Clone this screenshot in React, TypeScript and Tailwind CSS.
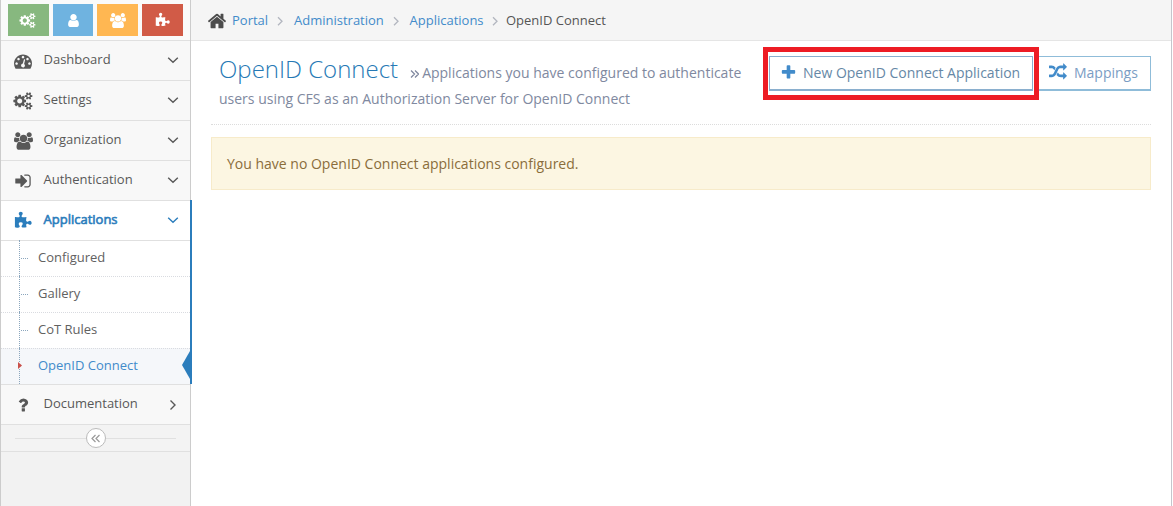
import React from "react";

type Glyph = { d: string; w: number };

const glyphs = {
  home: {
    w: 1792,
    d: "M1472 992v480q0 26-19 45t-45 19h-384v-384h-256v384h-384q-26 0-45-19t-19-45v-480q0-1 .5-3t.5-3l575-474 575 474q1 2 1 6zm223-69l-62 74q-8 9-21 11h-3q-13 0-21-7l-692-577-692 577q-12 8-24 7-13-2-21-11l-62-74q-8-10-7-23.5t11-21.5l719-599q32-26 76-26t76 26l244 204v-195q0-14 9-23t23-9h192q14 0 23 9t9 23v408l219 182q10 8 11 21.5t-7 23.5z",
  },
  plus: {
    w: 1792,
    d: "M1600 736v192q0 40-28 68t-68 28h-416v416q0 40-28 68t-68 28h-192q-40 0-68-28t-28-68v-416h-416q-40 0-68-28t-28-68v-192q0-40 28-68t68-28h416v-416q0-40 28-68t68-28h192q40 0 68 28t28 68v416h416q40 0 68 28t28 68z",
  },
  random: {
    w: 1792,
    d: "M666 481q-60 92-137 273-22-45-37-72.5t-40.5-63.5-51-56.5-63-35-81.5-14.5h-224q-14 0-23-9t-9-23v-192q0-14 9-23t23-9h224q250 0 410 225zm1126 799q0 14-9 23l-320 320q-9 9-23 9-13 0-22.5-9.5t-9.5-22.5v-192q-32 0-85 .5t-81 1-73-1-71-5-64-10.5-63-18.5-58-28.5-59-40-55-53.5-56-69.5q59-93 136-273 22 45 37 72.5t40.5 63.5 51 56.5 63 35 81.5 14.5h256v-192q0-14 9-23t23-9q12 0 24 10l319 319q9 9 9 23zm0-896q0 14-9 23l-320 320q-9 9-23 9-13 0-22.5-9.5t-9.5-22.5v-192h-256q-48 0-87 15t-69 45-51 61.5-45 77.5q-32 62-78 171-29 66-49.5 111t-54 105-64 100-74 83-90 68.5-106.5 42-128 16.5h-224q-14 0-23-9t-9-23v-192q0-14 9-23t23-9h224q48 0 87-15t69-45 51-61.5 45-77.5q32-62 78-171 29-66 49.5-111t54-105 64-100 74-83 90-68.5 106.5-42 128-16.5h256v-192q0-14 9-23t23-9q12 0 24 10l319 319q9 9 9 23z",
  },
  cogs: {
    w: 1920,
    d: "M832 896q0-106-75-181t-181-75-181 75-75 181 75 181 181 75 181-75 75-181zm768 512q0-52-38-90t-90-38-90 38-38 90q0 53 37.5 90.5t90.5 37.5 90.5-37.5 37.5-90.5zm0-1024q0-52-38-90t-90-38-90 38-38 90q0 53 37.5 90.5t90.5 37.5 90.5-37.5 37.5-90.5zm-384 421v185q0 10-7 19.5t-16 10.5l-155 24q-11 35-32 76 34 48 90 115 7 11 7 20 0 12-7 19-23 30-82.5 89.5t-78.5 59.5q-11 0-21-7l-115-90q-37 19-77 31-11 108-23 155-7 24-30 24h-186q-11 0-20-7.5t-10-17.5l-23-153q-34-10-75-31l-118 89q-7 7-20 7-11 0-21-8-144-133-144-160 0-9 7-19 10-14 41-53t47-61q-23-44-35-82l-152-24q-10-1-17-9.5t-7-19.5v-185q0-10 7-19.5t16-10.5l155-24q11-35 32-76-34-48-90-115-7-11-7-20 0-12 7-20 22-30 82-89t79-59q11 0 21 7l115 90q34-18 77-32 11-108 23-154 7-24 30-24h186q11 0 20 7.5t10 17.5l23 153q34 10 75 31l118-89q8-7 20-7 11 0 21 8 144 133 144 160 0 8-7 19-12 16-42 54t-45 60q23 48 34 82l152 23q10 2 17 10.5t7 19.5zm640 533v140q0 16-149 31-12 27-30 52 51 113 51 138 0 4-4 7-122 71-124 71-8 0-46-47t-52-68q-20 2-30 2t-30-2q-14 21-52 68t-46 47q-2 0-124-71-4-3-4-7 0-25 51-138-18-25-30-52-149-15-149-31v-140q0-16 149-31 13-29 30-52-51-113-51-138 0-4 4-7 4-2 35-20t59-34 30-16q8 0 46 46.5t52 67.5q20-2 30-2t30 2q51-71 92-112l6-2q4 0 124 70 4 3 4 7 0 25-51 138 17 23 30 52 149 15 149 31zm0-1024v140q0 16-149 31-12 27-30 52 51 113 51 138 0 4-4 7-122 71-124 71-8 0-46-47t-52-68q-20 2-30 2t-30-2q-14 21-52 68t-46 47q-2 0-124-71-4-3-4-7 0-25 51-138-18-25-30-52-149-15-149-31v-140q0-16 149-31 13-29 30-52-51-113-51-138 0-4 4-7 4-2 35-20t59-34 30-16q8 0 46 46.5t52 67.5q20-2 30-2t30 2q51-71 92-112l6-2q4 0 124 70 4 3 4 7 0 25-51 138 17 23 30 52 149 15 149 31z",
  },
  users: {
    w: 1920,
    d: "M593 896q-162 5-265 128h-134q-82 0-138-40.5t-56-118.5q0-353 124-353 6 0 43.5 21t97.5 42.5 119 21.5q67 0 133-23-5 37-5 66 0 139 81 256zm1071 637q0 120-73 189.5t-194 69.5h-874q-121 0-194-69.5t-73-189.5q0-53 3.5-103.5t14-109 26.5-108.5 43-97.5 62-81 85.5-53.5 111.5-20q10 0 43 21.5t73 48 107 48 135 21.5 135-21.5 107-48 73-48 43-21.5q61 0 111.5 20t85.5 53.5 62 81 43 97.5 26.5 108.5 14 109 3.5 103.5zm-1024-1277q0 106-75 181t-181 75-181-75-75-181 75-181 181-75 181 75 75 181zm704 384q0 159-112.5 271.5t-271.5 112.5-271.5-112.5-112.5-271.5 112.5-271.5 271.5-112.5 271.5 112.5 112.5 271.5zm576 225q0 78-56 118.5t-138 40.5h-134q-103-123-265-128 81-117 81-256 0-29-5-66 66 23 133 23 59 0 119-21.5t97.5-42.5 43.5-21q124 0 124 353zm-128-609q0 106-75 181t-181 75-181-75-75-181 75-181 181-75 181 75 75 181z",
  },
  user: {
    w: 1792,
    d: "M1536 1399q0 109-62.5 187t-150.5 78h-854q-88 0-150.5-78t-62.5-187q0-85 8.5-160.5t31.5-152 58.5-131 94-89 134.5-34.5q131 128 313 128t313-128q76 0 134.5 34.5t94 89 58.5 131 31.5 152 8.5 160.5zm-256-887q0 159-112.5 271.5t-271.5 112.5-271.5-112.5-112.5-271.5 112.5-271.5 271.5-112.5 271.5 112.5 112.5 271.5z",
  },
  puzzle: {
    w: 1792,
    d: "M1755 1083q0 81-44.5 135t-123.5 54q-41 0-77.5-17.5t-59-38-56.5-38-71-17.5q-110 0-110 124 0 39 16 115t15 115v5q-22 0-33 1-34 3-97.5 11.5t-115.5 13.5-98 5q-61 0-103-26.5t-42-83.5q0-37 17.5-71t38-56.5 38-59 17.5-77.5q0-79-54-123.5t-135-44.5q-84 0-143 45.5t-59 127.5q0 43 15 83t33.5 64.5 33.5 53 15 50.5q0 45-46 89-37 35-117 35-95 0-245-24-9-2-27.5-4t-27.5-4l-13-2q-1 0-3-1-2 0-2-1v-1024q2 1 17.5 3.5t34 5 21.5 3.5q150 24 245 24 80 0 117-35 46-44 46-89 0-22-15-50.5t-33.5-53-33.5-64.5-15-83q0-82 59-127.5t144-45.5q80 0 134 44.5t54 123.5q0 41-17.5 77.5t-38 59-38 56.5-17.5 71q0 57 42 83.5t103 26.5q64 0 180-15t163-17v2q-1 2-3.5 17.5t-5 34-3.5 21.5q-24 150-24 245 0 80 35 117 44 46 89 46 22 0 50.5-15t53-33.5 64.5-33.5 83-15q82 0 127.5 59t45.5 143z",
  },
  signIn: {
    w: 1792,
    d: "M1312 896q0 26-19 45l-544 544q-19 19-45 19t-45-19-19-45v-288h-448q-26 0-45-19t-19-45v-384q0-26 19-45t45-19h448v-288q0-26 19-45t45-19 45 19l544 544q19 19 19 45zm352-352v704q0 119-84.5 203.5t-203.5 84.5h-320q-13 0-22.5-9.5t-9.5-22.5q0-4-1-20t-.5-26.5 3-23.5 10-19.5 20.5-6.5h320q66 0 113-47t47-113v-704q0-66-47-113t-113-47h-312l-11.5-1-11.5-3-8-5.5-7-9-2-13.5q0-4-1-20t-.5-26.5 3-23.5 10-19.5 20.5-6.5h320q119 0 203.5 84.5t84.5 203.5z",
  },
  gauge: {
    w: 1792,
    d: "M384 1152q0-53-37.5-90.5t-90.5-37.5-90.5 37.5-37.5 90.5 37.5 90.5 90.5 37.5 90.5-37.5 37.5-90.5zm192-448q0-53-37.5-90.5t-90.5-37.5-90.5 37.5-37.5 90.5 37.5 90.5 90.5 37.5 90.5-37.5 37.5-90.5zm428 481l101-382q6-26-7.5-48.5t-38.5-29.5-48 6.5-30 39.5l-101 382q-60 5-107 43.5t-63 98.5q-20 77 20 146t117 89 146-20 89-117q16-60-6-117t-72-91zm660-33q0-53-37.5-90.5t-90.5-37.5-90.5 37.5-37.5 90.5 37.5 90.5 90.5 37.5 90.5-37.5 37.5-90.5zm-640-640q0-53-37.5-90.5t-90.5-37.5-90.5 37.5-37.5 90.5 37.5 90.5 90.5 37.5 90.5-37.5 37.5-90.5zm448 192q0-53-37.5-90.5t-90.5-37.5-90.5 37.5-37.5 90.5 37.5 90.5 90.5 37.5 90.5-37.5 37.5-90.5zm320 448q0 261-141 483-19 29-54 29h-1402q-35 0-54-29-141-221-141-483 0-182 71-348t191-286 286-191 348-71 348 71 286 191 191 286 71 348z",
  },
  question: {
    w: 1792,
    d: "M1088 1256v240q0 16-12 28t-28 12h-240q-16 0-28-12t-12-28v-240q0-16 12-28t28-12h240q16 0 28 12t12 28zm316-600q0 54-15.5 101t-35 76.5-55 59.5-57.5 43.5-61 35.5q-41 23-68.5 65t-27.5 67q0 17-12 32.5t-28 15.5h-240q-15 0-25.5-18.5t-10.5-37.5v-45q0-83 65-156.5t143-108.5q59-27 84-56t25-76q0-42-46.5-74t-107.5-32q-65 0-108 29-35 25-107 115-13 16-31 16-12 0-25-8l-164-125q-13-10-15.5-25t5.5-28q160-266 464-266 80 0 161 31t146 83 106 127.5 41 158.5z",
  },
} satisfies Record<string, Glyph>;

type IconName = keyof typeof glyphs;

function Icon({ name, className }: { name: IconName; className: string }) {
  const g = glyphs[name];
  return (
    <svg viewBox={`0 0 ${g.w} 1792`} className={`shrink-0 overflow-visible fill-current ${className}`} aria-hidden="true">
      <path d={g.d} />
    </svg>
  );
}

function Stroke({ d, className, box = "0 0 12 12" }: { d: string; className: string; box?: string }) {
  return (
    <svg viewBox={box} className={`shrink-0 fill-none stroke-current ${className}`} aria-hidden="true">
      <path d={d} />
    </svg>
  );
}

const shortcuts: { icon: IconName; bg: string; size: string }[] = [
  { icon: "cogs", bg: "bg-[#87b87f]", size: "h-[15px] w-[16px]" },
  { icon: "user", bg: "bg-[#6fb3e0]", size: "h-[15px] w-[15px]" },
  { icon: "users", bg: "bg-[#ffb752]", size: "h-[15px] w-[16px]" },
  { icon: "puzzle", bg: "bg-[#d15b47]", size: "h-[15px] w-[15px]" },
];

function MenuRow({ icon, label, size, active, right }: { icon: IconName; label: string; size: string; active?: boolean; right?: boolean }) {
  return (
    <a
      className={`flex h-10 items-center border-t border-[#e0e0e0] pr-[11px] pl-[7px] text-[13px] ${
        active ? "bg-white text-[#2b7dbc]" : "bg-[#f8f8f8] text-[#585858]"
      }`}
    >
      <span className="flex w-[30px] justify-center pt-px">
        <Icon name={icon} className={size} />
      </span>
      <span className={`grow pb-1 pl-[5.5px] leading-5 ${active ? "[-webkit-text-stroke:0.6px_#2b7dbc]" : ""}`}>{label}</span>
      <span className="pb-0.5">
        <Stroke
          d={right ? "M3.5 1.5 8 6 3.5 10.5" : "M1.2 3.7 6 8.2 10.8 3.7"}
          className={`block h-3 w-3 stroke-[1.4] ${right ? "translate-y-px" : ""}`}
        />
      </span>
    </a>
  );
}

function SubRow({ label, current, first }: { label: string; current?: boolean; first?: boolean }) {
  return (
    <a
      className={`relative flex h-9 items-center border-t pl-[37px] text-[13px] ${first ? "border-solid border-[#e0e0e0]" : "border-dotted border-[#d9dbe0]"} ${
        current ? "bg-[#f5f7fa] text-[#428bca]" : "bg-white text-[#616161]"
      }`}
    >
      <span className="absolute -top-px bottom-0 left-[18px] border-l border-dotted border-[#8ba6bd]" />
      {current ? (
        <svg viewBox="0 0 4 7" className="absolute top-[13px] left-[17px] h-[7px] w-[4px] bg-[#f5f7fa] fill-[#c9504a]">
          <path d="M0 0 4 3.5 0 7z" />
        </svg>
      ) : (
        <span className="absolute top-[17px] left-[20px] w-[7px] border-t border-dotted border-[#8ba6bd]" />
      )}
      <span className="pb-1 leading-5">{label}</span>
      {current && (
        <svg viewBox="0 0 8 28" className="absolute top-0.5 right-0 h-7 w-2 fill-[#2b7dbc]">
          <path d="M8 0 0 14 8 28z" />
        </svg>
      )}
    </a>
  );
}

function Sidebar() {
  return (
    <aside className="flex w-[191px] shrink-0 flex-col border-x border-[#ccc] bg-[#f2f2f2]">
      <div className="flex h-10 gap-[4px] bg-[#fafafa] pt-1 pl-[7px]">
        {shortcuts.map((s) => (
          <button key={s.icon} className={`flex h-8 w-[40.7px] items-center justify-center text-white ${s.bg}`}>
            <Icon name={s.icon} className={s.size} />
          </button>
        ))}
      </div>
      <nav>
        <MenuRow icon="gauge" label="Dashboard" size="h-[18px] w-[18px]" />
        <MenuRow icon="cogs" label="Settings" size="h-[18px] w-[19px]" />
        <MenuRow icon="users" label="Organization" size="h-[18px] w-[19px]" />
        <MenuRow icon="signIn" label="Authentication" size="h-[18px] w-[18px]" />
        <div className="relative">
          <MenuRow icon="puzzle" label="Applications" size="h-[18px] w-[18px]" active />
          <SubRow label="Configured" first />
          <SubRow label="Gallery" />
          <SubRow label="CoT Rules" />
          <SubRow label="OpenID Connect" current />
          <span className="absolute top-0 -right-[2px] bottom-0 w-[2px] bg-[#2b7dbc]" />
        </div>
        <MenuRow icon="question" label="Documentation" size="h-[18px] w-[18px]" right />
      </nav>
      <div className="flex h-7 items-center border-y border-[#e0e0e0] bg-[#f3f3f3] px-[14px]">
        <span className="h-px grow bg-[#e0e0e0]" />
        <span className="flex h-5 w-5 items-center justify-center rounded-full border border-[#bbb] bg-white text-[#999]">
          <Stroke d="M5.5 2 2 5.5 5.5 9M9.5 2 6 5.5 9.5 9" className="h-[11px] w-[11px] stroke-[1.2]" box="0 0 11 11" />
        </span>
        <span className="h-px grow bg-[#e0e0e0]" />
      </div>
    </aside>
  );
}

function Separator({ className }: { className: string }) {
  return <Stroke d="M4 2.2 8 6.2 4 10.2" className={`h-3 w-3 stroke-[1.3] text-[#b2b6bf] ${className}`} />;
}

function Breadcrumbs() {
  return (
    <div className="flex h-[41px] items-center border-b border-[#e5e5e5] bg-[#f5f5f5] pt-px pl-[17px] text-[13px] text-[#428bca]">
      <Icon name="home" className="-ml-px h-[20px] w-[20px] text-[#4c4c4c]" />
      <span className="ml-[5px] w-[36px]">Portal</span>
      <Separator className="mr-[8px] ml-[6px]" />
      <span className="w-[90px]">Administration</span>
      <Separator className="mr-[8px] ml-[5.5px]" />
      <span className="w-[74px]">Applications</span>
      <Separator className="mr-[5px] ml-[5.5px]" />
      <span className="text-[#555]">OpenID Connect</span>
    </div>
  );
}

export default function App() {
  return (
    <div className="flex h-[506px] w-[1173px] overflow-hidden bg-white font-['Open_Sans',sans-serif]">
      <Sidebar />
      <main className="flex w-[981px] flex-col border-r border-[#c5c5cc]">
        <Breadcrumbs />
        <div className="mr-5 ml-5 flex h-[84px] border-b border-dotted border-[#dcdcdc] pt-[14px] pl-2">
          <h1 className="w-[549px] pt-px text-2xl leading-[26px] font-light whitespace-nowrap text-[#2679b5]">
            OpenID Connect
            <small className="text-sm leading-[18px] font-normal text-[#8089a0]">
              <Stroke
                d="M1 2.5 4.5 6 1 9.5M5 2.5 8.5 6 5 9.5"
                className="mr-[3px] ml-[12px] inline-block h-3 w-[9px] stroke-[1.3] align-[-2px]"
                box="0 0 9 12"
              />
              Applications you have configured to authenticate
              <br />
              users using CFS as an Authorization Server for OpenID Connect
            </small>
          </h1>
          <div className="-mt-[8px] -ml-[5px] flex h-[53px] w-[276px] shrink-0 border-5 border-[#ed1c24] py-1 pr-px pl-px">
            <button className="flex h-[35px] w-[265px] items-center border border-b-2 border-[#8aafce] pl-[10px] text-sm text-[#6688a6]">
              <Icon name="plus" className="mb-0.5 h-[17px] w-[17px] text-[#428bca]" />
              <span className="ml-[6px] whitespace-nowrap">New OpenID Connect Application</span>
            </button>
          </div>
          <button className="mt-px flex h-[35px] w-[112px] shrink-0 items-center border border-b-2 border-l-0 border-[#8fbcd9] pl-[10px] text-sm text-[#7b9dc4]">
            <Icon name="random" className="mb-0.5 h-[18px] w-[18px] text-[#428bca]" />
            <span className="ml-[7px]">Mappings</span>
          </button>
        </div>
        <div className="mt-3 mr-5 ml-5 flex h-[53px] items-center border border-[#f7ebca] bg-[#fcf6e2] pl-[15px] text-sm text-[#8a6d3b]">
          You have no OpenID Connect applications configured.
        </div>
      </main>
    </div>
  );
}
